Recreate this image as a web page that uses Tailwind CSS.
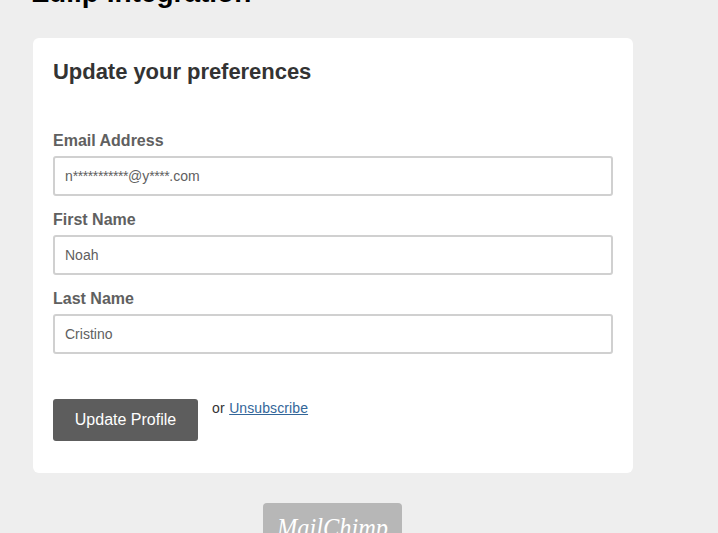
<!DOCTYPE html>
<html lang="en">
<head>
<meta charset="utf-8">
<title>Update your preferences</title>
<script src="https://cdn.jsdelivr.net/npm/@tailwindcss/browser@4"></script>
</head>
<body class="h-screen overflow-hidden bg-[#eeeeee] font-['Liberation_Sans',Arial,sans-serif] text-sm text-[#333333]">
<div class="ml-[33px] w-[600px]">
  <h1 class="-mt-6 h-[62px] text-[28px] leading-[34px] font-bold whitespace-nowrap text-black"><span class="-ml-px">Zulip Integration</span></h1>
  <main class="h-[435px] rounded-md bg-white px-5 pt-5">
    <h2 class="text-[22px] leading-[27px] font-bold tracking-[-0.04px]">Update your preferences</h2>
    <form class="mt-[45px]">
      <label class="block h-[26px] pt-px text-base leading-5 font-bold text-[#606060]">Email Address</label>
      <div class="mb-[13px] flex h-10 w-full items-center rounded-[3px] border-2 border-[#d0d0d0] px-2.5 text-sm text-[#606060]">n<span class="tracking-[-0.43px]">***********</span>@y<span class="tracking-[-0.43px]">****</span>.com</div>
      <label class="block h-[26px] pt-px text-base leading-5 font-bold text-[#606060]" for="first">First Name</label>
      <input id="first" class="mb-[13px] block h-10 w-full rounded-[3px] border-2 border-[#d0d0d0] px-2.5 text-sm text-[#606060]" value="Noah">
      <label class="block h-[26px] pt-px text-base leading-5 font-bold text-[#606060]" for="last">Last Name</label>
      <input id="last" class="block h-10 w-full rounded-[3px] border-2 border-[#d0d0d0] px-2.5 text-sm text-[#606060]" value="Cristino">
      <div class="mt-[45px] flex items-start">
        <button type="button" class="h-[42px] w-[145px] rounded-[3px] bg-[#5d5d5d] text-base text-white">Update Profile</button>
        <p class="ml-3.5 leading-[19px] tracking-[0.1px]">or <a href="#" class="ml-[0.5px] text-[#336699] underline">Unsubscribe</a></p>
      </div>
    </form>
  </main>
  <footer class="mt-[30px] ml-[230px] h-[54px] w-[139px] rounded bg-[#b7b7b7]">
    <svg class="h-[54px] w-[139px]" viewBox="0 0 139 54" role="img" aria-label="MailChimp">
      <text x="14" y="34" textLength="111" lengthAdjust="spacingAndGlyphs" fill="#ffffff" font-size="28" font-style="italic" font-family="'Brush Script MT','Liberation Serif',cursive">MailChimp</text>
    </svg>
  </footer>
</div>
</body>
</html>
